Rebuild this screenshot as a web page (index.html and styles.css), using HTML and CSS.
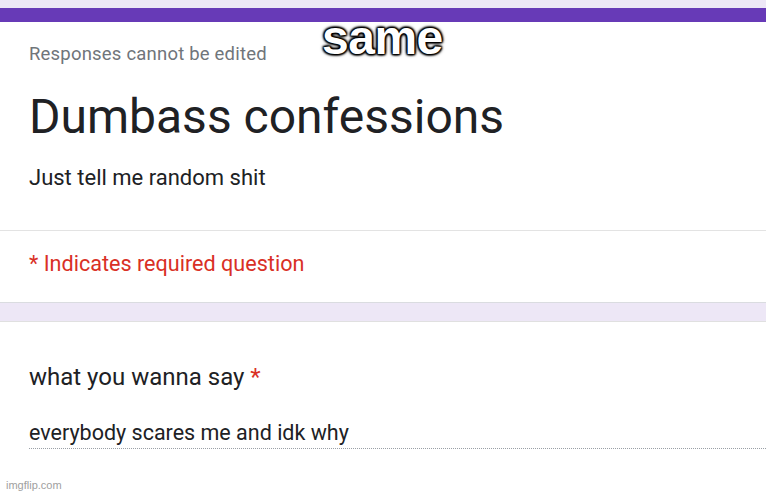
FILE: index.html
```html
<!DOCTYPE html>
<html>
<head>
<meta charset="utf-8">
<link rel="stylesheet" href="styles.css">
</head>
<body>
<div class="page">
  <div class="strip"></div>
  <div class="header-card">
    <div class="note">Responses cannot be edited</div>
    <h1 class="title">Dumbass confessions</h1>
    <div class="desc">Just tell me random shit</div>
  </div>
  <div class="required">* Indicates required question</div>
  <div class="gap"></div>
  <div class="question-card">
    <div class="question">what you wanna say <span class="star">*</span></div>
    <div class="answer">everybody scares me and idk why</div>
  </div>
  <div class="meme">same</div>
  <div class="watermark">imgflip.com</div>
</div>
</body>
</html>
```
FILE: styles.css
```css
html, body {
  margin: 0;
  padding: 0;
}
body {
  width: 766px;
  height: 494px;
  overflow: hidden;
  background: #ffffff;
  font-family: Roboto, "Liberation Sans", sans-serif;
}
.page {
  position: relative;
  display: flex;
  flex-direction: column;
  height: 494px;
}
.strip {
  height: 8px;
  flex: none;
  background: #ede7f6;
}
.header-card {
  flex: none;
  background: #ffffff;
  border-top: 14px solid #673ab7;
  border-bottom: 1px solid #e3e3e3;
  height: 223px;
  box-sizing: border-box;
  padding: 21px 0 0 29px;
}
.note {
  font-size: 18.5px;
  color: #70757a;
  line-height: 22px;
  letter-spacing: 0.2px;
}
.title {
  margin: 24px 0 0 0;
  font-weight: 400;
  font-size: 48px;
  line-height: 56px;
  color: #202124;
}
.desc {
  margin-top: 20px;
  font-size: 22px;
  line-height: 26px;
  color: #202124;
}
.required {
  flex: none;
  height: 72px;
  box-sizing: border-box;
  padding: 20px 0 0 29px;
  border-bottom: 1px solid #dadce0;
  font-size: 21.6px;
  line-height: 26px;
  color: #d93025;
}
.gap {
  flex: none;
  height: 18px;
  background: #ede7f6;
  border-bottom: 1px solid #e0e0e0;
}
.question-card {
  flex: 1;
  background: #ffffff;
  padding: 41px 0 0 29px;
}
.question {
  font-size: 24px;
  line-height: 28px;
  color: #202124;
}
.star {
  color: #d93025;
}
.answer {
  margin-top: 29px;
  font-size: 21.5px;
  line-height: 26px;
  color: #202124;
  padding-bottom: 2px;
  border-bottom: 1px dotted #9aa0a6;
}
.meme {
  position: absolute;
  left: 322px;
  top: 12px;
  font-family: "Liberation Sans", Arial, sans-serif;
  font-weight: 700;
  font-size: 48px;
  line-height: 52px;
  color: #ffffff;
  letter-spacing: -0.5px;
  text-shadow: 0 0 2px #000, 0 0 3px #000, 0 0 4px #000, 1px 1px 2px #000, -1px -1px 2px #000, 1px -1px 2px #000, -1px 1px 2px #000;
}
.watermark {
  position: absolute;
  left: 6px;
  bottom: 3px;
  font-family: "Liberation Sans", Arial, sans-serif;
  font-size: 11px;
  color: #a0a0a0;
}
```
